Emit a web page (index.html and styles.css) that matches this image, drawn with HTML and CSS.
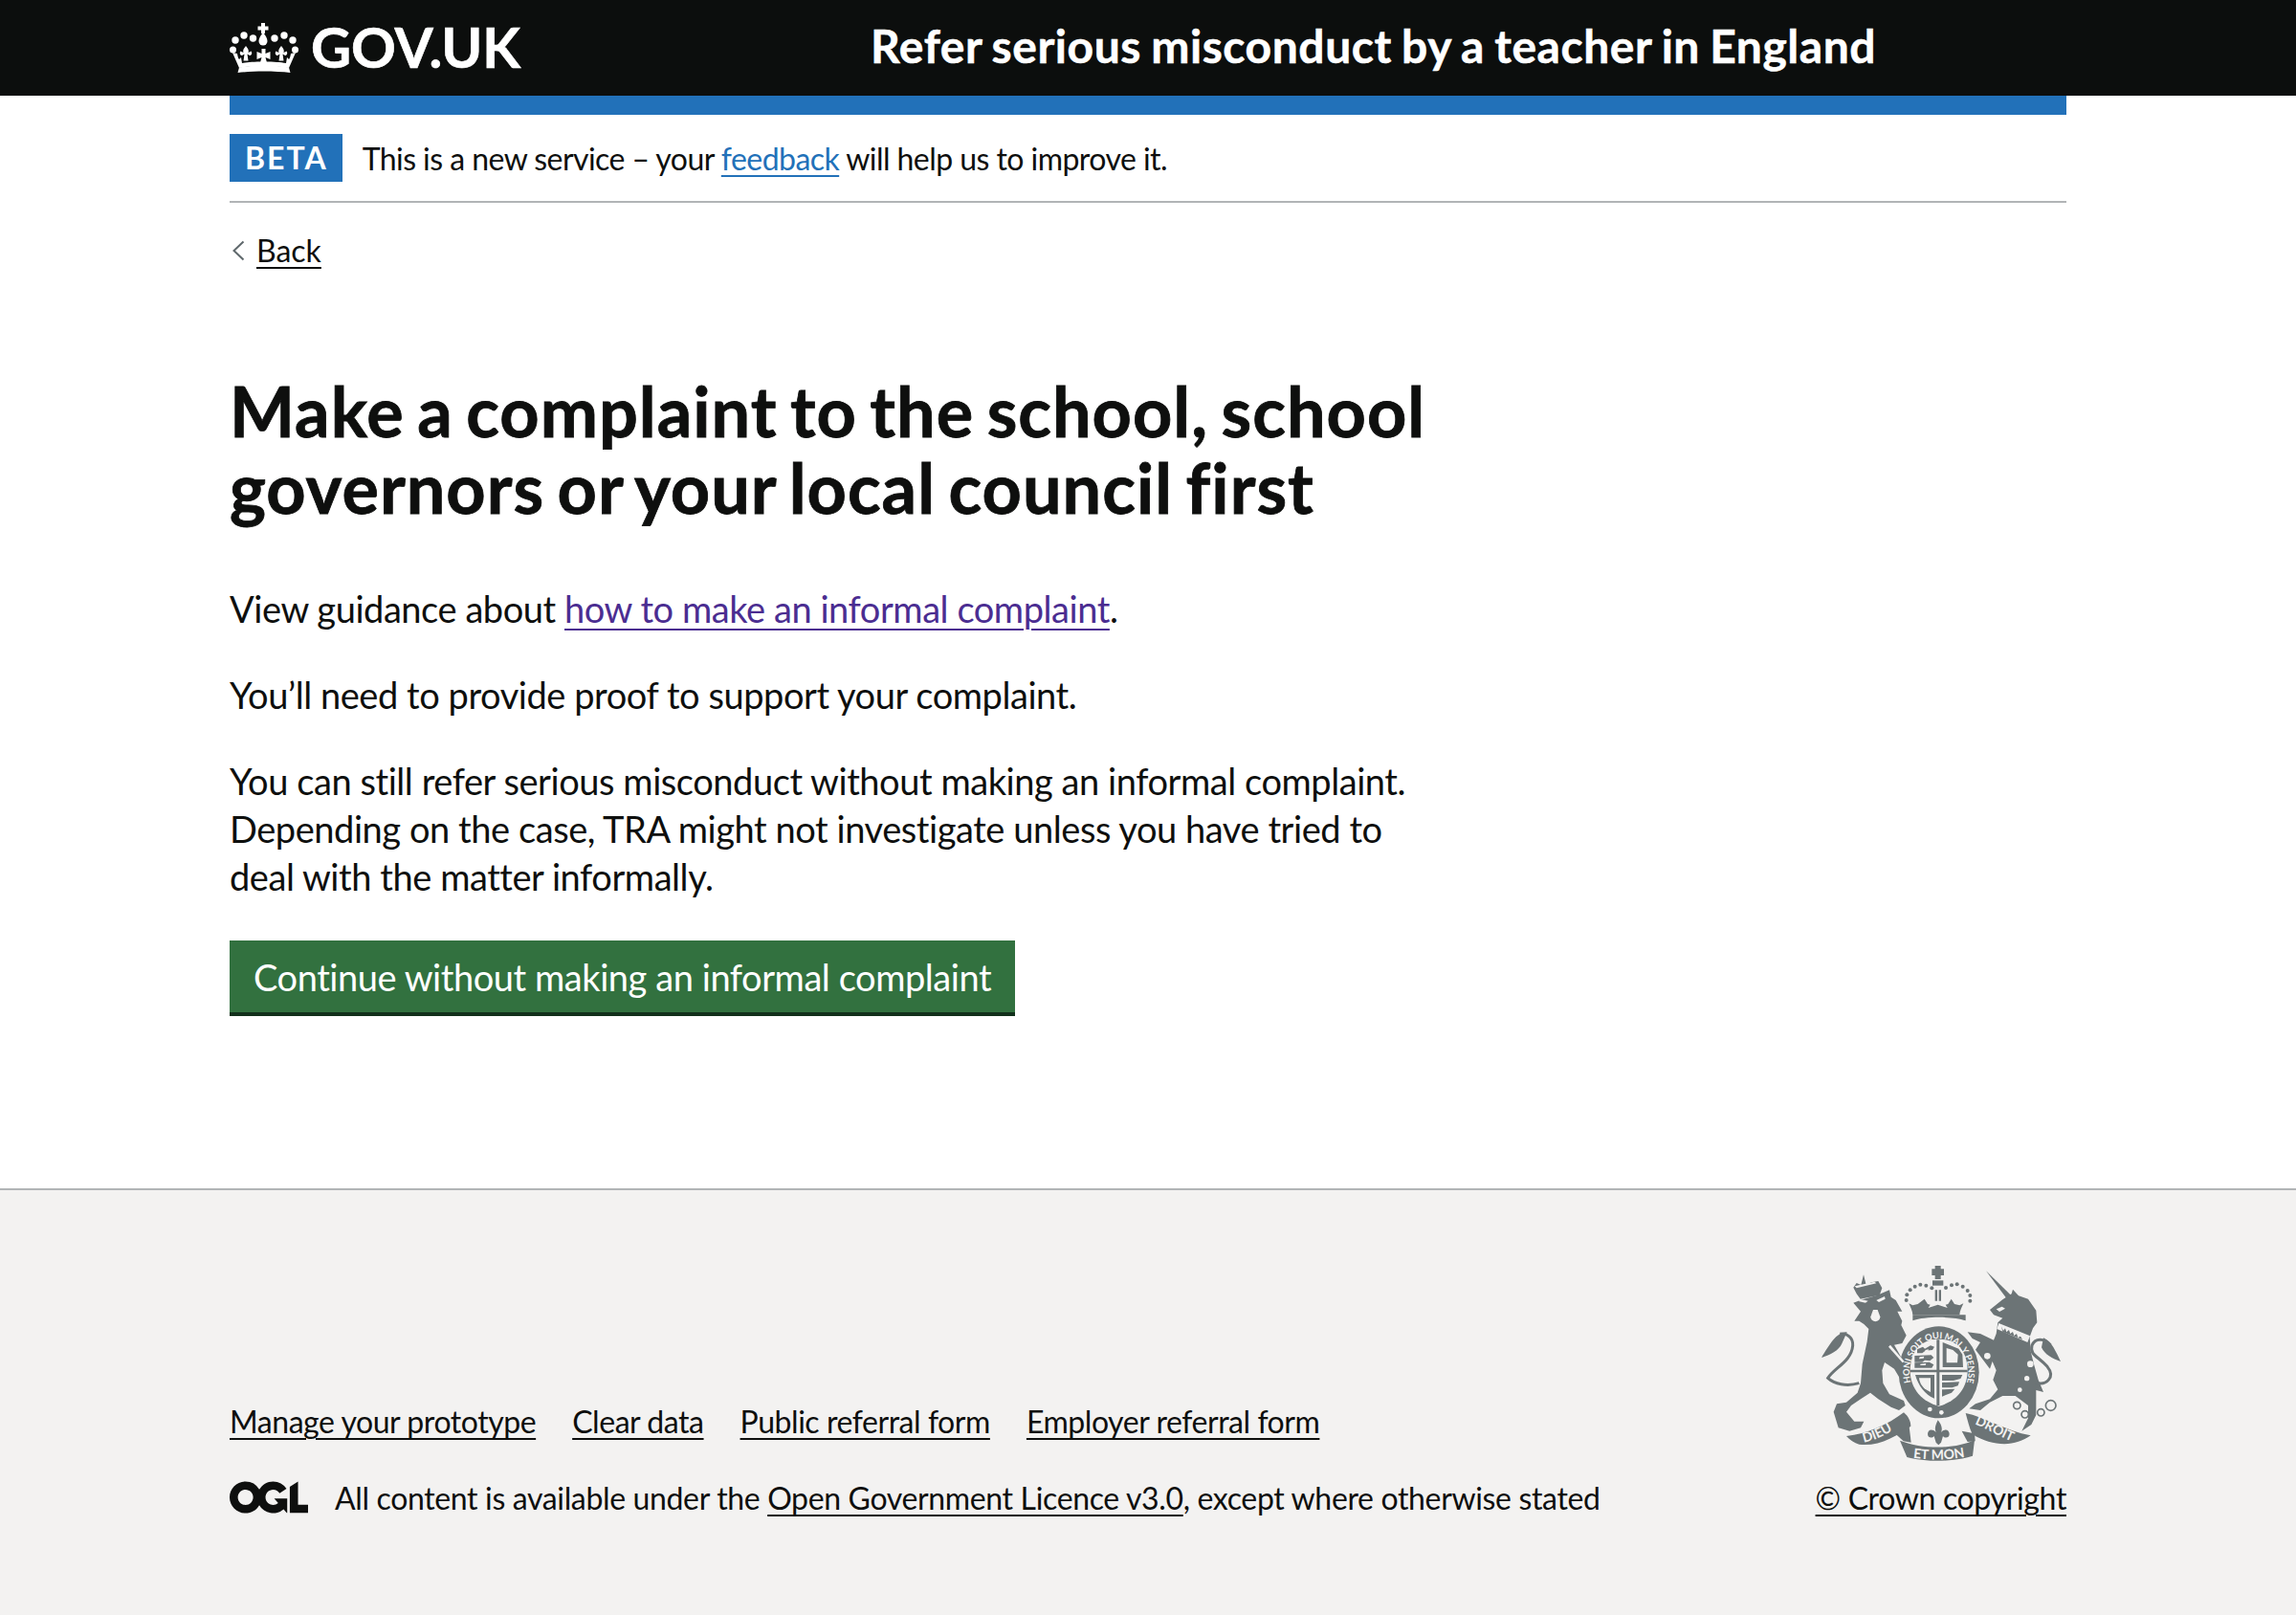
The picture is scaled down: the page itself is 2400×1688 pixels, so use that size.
FILE: index.html
```html
<!DOCTYPE html>
<html lang="en">
<head>
  <title>Make a complaint to the school, school governors or your local council first</title>
  <meta name="viewport" content="width=device-width, initial-scale=1.0">
  <link rel="stylesheet" href="styles.css">
</head>
<body>
  <header class="header">
    <div class="width-container header-inner">
      <a class="logo" href="#">
        <svg class="crown" viewBox="0 0 72 52" aria-hidden="true">
          <g fill="#fff">
            <path d="M33 0h4v3.500h3.500v4h-3.500v3.500h-4v-3.500h-3.500v-4h3.500z"/>
            <path d="M35 10c2.500 3 4.500 6 4.500 9a4.500 4.500 0 0 1-9 0c0-3 2-6 4.500-9z"/>
            <circle cx="6" cy="18" r="3.700"/>
            <circle cx="15" cy="13" r="3.700"/>
            <circle cx="24.500" cy="16" r="3.700"/>
            <circle cx="47" cy="16" r="3.700"/>
            <circle cx="57" cy="13" r="3.700"/>
            <circle cx="66" cy="18" r="3.700"/>
            <circle cx="3.500" cy="28" r="3.500"/>
            <circle cx="68.500" cy="28" r="3.500"/>
            <path d="M17 24c2 2.500 3.500 4.500 2.500 7l3 -1.500c1.500 2 .5 4.500-1.500 4.500l-2.500-1.500 1 7h-5l1-7-2.500 1.500c-2 0-3-2.500-1.500-4.500l3 1.500c-1-2.500.5-4.500 2.500-7z"/>
            <path d="M54 24c2 2.500 3.500 4.500 2.500 7l3-1.500c1.500 2 .5 4.500-1.500 4.500l-2.500-1.500 1 7h-5l1-7-2.500 1.500c-2 0-3-2.500-1.500-4.500l3 1.500c-1-2.500.5-4.500 2.500-7z"/>
            <path d="M33.500 27h4v5l5-2v8l-5-2 1.500 5.500h-7l1.500-5.500-5 2v-8l5 2z"/>
            <path d="M3 31l5 1c.5 3 1 5 2 6l2-2 1 6c6-1 12-1.500 23-1.500s17 .5 23 1.500l1-6 2 2c1-1 1.500-3 2-6l5-1-7 16c-4-1-15-2-26-2s-22 1-26 2z"/>
            <path d="M10 46.500c8-1.500 17-2 26-2s18 .5 26 2l1.500 5.500c-8-1-18-1.500-27.500-1.500s-19.500.5-27.500 1.500z"/>
          </g>
        </svg>
        <span class="logo-text">GOV.UK</span>
      </a>
      <a class="service-name" href="#">Refer serious misconduct by a teacher in England</a>
    </div>
  </header>

  <div class="width-container">
    <div class="blue-bar"></div>
    <div class="phase-banner">
      <strong class="tag">BETA</strong>
      <span class="phase-text">This is a new service – your <a class="link-blue" href="#">feedback</a> will help us to improve it.</span>
    </div>
    <div class="back">
      <svg class="back-arrow" viewBox="0 0 14 22" aria-hidden="true"><path d="M12.500 1.500 2.500 11l10 9.500" fill="none" stroke="#5f686c" stroke-width="2"/></svg>
      <a class="link" href="#">Back</a>
    </div>

    <main class="main">
      <h1 class="title">Make a complaint to the school, school governors or your local council first</h1>
      <p class="body-text">View guidance about <a class="link-visited" href="#">how to make an informal complaint</a>.</p>
      <p class="body-text">You’ll need to provide proof to support your complaint.</p>
      <p class="body-text">You can still refer serious misconduct without making an informal complaint. Depending on the case, TRA might not investigate unless you have tried to deal with the matter informally.</p>
      <a class="button" href="#">Continue without making an informal complaint</a>
    </main>
  </div>

  <footer class="footer">
    <div class="width-container footer-inner">
      <div class="footer-meta">
        <ul class="footer-links">
          <li><a class="link" href="#">Manage your prototype</a></li>
          <li><a class="link" href="#">Clear data</a></li>
          <li><a class="link" href="#">Public referral form</a></li>
          <li><a class="link" href="#">Employer referral form</a></li>
        </ul>
        <div class="licence">
          <svg class="ogl" viewBox="0 0 483.200 195.700" aria-hidden="true">
            <path fill="#0e0f0e" d="M421.500 142.800V.1l-50.700 32.300v161.100h112.400v-50.700zm-122.300-9.600A47.120 47.120 0 0 1 221 97.800c0-26 21.100-47.100 47.100-47.100 16.700 0 31.400 8.700 39.700 21.800l42.700-27.200A97.630 97.630 0 0 0 268.100 0c-36.500 0-68.300 20.100-85.100 49.700A98 98 0 0 0 97.800 0C43.900 0 0 43.900 0 97.800s43.900 97.800 97.800 97.800c36.500 0 68.300-20.100 85.100-49.700a97.760 97.760 0 0 0 149.600 25.400l19.400 22.200h3v-87.800h-80l24.300 27.500zM97.800 145c-26 0-47.100-21.100-47.100-47.100s21.100-47.100 47.100-47.100 47.200 21 47.200 47S123.800 145 97.800 145"/>
          </svg>
          <span>All content is available under the <a class="link" href="#">Open Government Licence v3.0</a>, except where otherwise stated</span>
        </div>
      </div>
      <div class="copyright">
        <svg class="arms" viewBox="0 0 900 699" aria-hidden="true">
          <defs>
            <path id="garter" d="M370 475A92 106 0 1 1 510 475"/>
            <path id="scroll-left" d="M205 626C245 618 280 600 322 570"/>
            <path id="scroll-mid" d="M345 672C400 682 480 682 535 668"/>
            <path id="scroll-right" d="M552 568C590 582 625 606 676 626"/>
          </defs>
          <g fill="#6c7476">
            <!-- lion -->
            <path d="M172 188L200 178 245 165 285 148 290 170 305 180 325 215 310 215 325 245 322 258 338 290 325 315 300 320 345 400 345 420 335 430 318 425 300 395 270 375 262 400 265 440 285 475 330 495 335 510 315 525 290 515 250 490 225 470 195 490 165 510 150 530 175 560 205 560 195 580 160 590 125 580 110 530 120 505 150 500 185 470 195 440 200 380 215 310 220 270 205 255 190 245 175 245 195 215z"/>
            <path d="M190 440C150 452 112 442 92 424 112 392 166 372 170 322 172 298 152 282 130 286" fill="none" stroke="#6c7476" stroke-width="9"/>
            <path d="M152 280C122 276 96 320 72 360 100 352 126 338 136 316z"/>
            <!-- lion crown -->
            <path d="M172 140l10-14 14 6 8-32 8 32 16-8 22-4 12 22-8 22-60 12-12-16z"/>
            <!-- unicorn -->
            <path d="M588 88l78 76-14 10z"/>
            <path d="M600 210L640 178 668 160 672 146 690 166 720 176 745 212 748 250 735 268 725 295 728 340 738 380 752 430 768 468 745 462 745 540 730 570 700 590 720 550 720 510 680 480 640 480 600 500 570 525 535 520 555 505 600 490 625 460 610 430 620 400 608 372 600 395 555 335 570 312 545 300 530 280 570 285 612 305 620 285 625 250 640 236 612 226z"/>
            <path d="M742 438C778 450 806 420 780 388 752 356 724 352 732 322 742 296 772 300 790 320" fill="none" stroke="#6c7476" stroke-width="9"/>
            <path d="M768 298C794 308 808 344 822 372 796 364 772 350 762 328z"/>
            <!-- crown on the shield -->
            <path d="M428 72h18v10h10v20h-10v12h-18v-12h-10v-20h10z"/>
            <path d="M420 118h34v16h-34z"/>
            <path d="M428 148h7v34h-7zM440 148h7v34h-7z"/>
            <circle cx="338" cy="180" r="6"/><circle cx="340" cy="163" r="6"/><circle cx="350" cy="148" r="6"/>
            <circle cx="365" cy="137" r="6"/><circle cx="382" cy="131" r="6"/><circle cx="400" cy="134" r="6"/>
            <circle cx="418" cy="142" r="6"/><circle cx="462" cy="141" r="6"/><circle cx="480" cy="133" r="6"/>
            <circle cx="497" cy="130" r="6"/><circle cx="515" cy="137" r="6"/><circle cx="530" cy="150" r="6"/>
            <circle cx="538" cy="165" r="6"/><circle cx="538" cy="182" r="6"/>
            <path d="M395 176l10 16 8 2-6 10 30-10 30 10-6-10 8-2 10-16 10 16 16 4 12-6c-4 10-12 24-12 36H358c0-12-8-26-12-36l12 6 16-4z"/>
            <path d="M358 226h166v18c-40-14-126-14-166 0z"/>
            <!-- garter ring -->
            <ellipse cx="440" cy="406" rx="126" ry="144"/>
            <!-- fleur and ribbon -->
            <path d="M437 556c10 12 16 26 10 38 14-14 26-6 26 6 0 12-14 14-20 6l-6 20-8 8-8-8-6-20c-6 8-20 6-20-6 0-12 12-20 26-6-6-12 0-26 6-38z"/>
            <path d="M150 606C215 600 280 570 330 532 345 545 352 560 352 575 310 605 250 640 190 632 175 628 160 618 150 606z"/>
            <path d="M305 600l42-24 6 50-24-4z"/>
            <path d="M318 620C390 648 490 648 552 618L546 668C480 688 400 688 340 672z"/>
            <path d="M524 534C580 545 650 590 728 604 680 640 610 640 545 600 535 580 530 555 524 534z"/>
            <path d="M512 590l40 8 2 24-24 2z"/>
          </g>
          <g fill="#f3f2f1">
            <!-- shield ground -->
            <path d="M440 302C490 302 528 330 530 400 530 460 490 500 440 512 390 500 350 460 350 400 352 330 390 302 440 302z"/>
            <circle cx="603" cy="272" r="9"/>
            <circle cx="592" cy="355" r="10"/>
            <circle cx="727" cy="380" r="10"/>
            <circle cx="716" cy="425" r="8"/>
            <circle cx="694" cy="461" r="7"/>
            <circle cx="448" cy="532" r="7"/>
            <circle cx="412" cy="522" r="7"/>
            <path d="M628 252l98 40-8 20-96-42z"/>
            <path d="M226 232a14 14 0 1 0 30 0l-8-22h-14z"/>
            <path d="M190 176l28 6-8 6-20-4zM270 168l-26 12 8 6 20-10z"/>
            <path d="M288 320l44 52-6 4-44-50z"/>
            <path d="M370 248c40-14 100-14 140 0l-6 12c-40-12-90-12-128 0z"/>
            <path d="M176 136l62-14 6 5-62 15z"/>
            <path d="M620 208l18-8 10 6-18 10z"/>
          </g>
          <g fill="#6c7476">
            <!-- shield cross, quarters -->
            <path d="M433 304h9v206h-9zM350 398h180v8h-180z"/>
            <path d="M372 334l18-8 6 6 18-10 12 4-6 10-22 2-10 8-16 0zM364 354l52-2 8 8-12 10-16-2-8 6-24 0zM364 376l46-2 14 8-6 10-54 0z"/>
            <path d="M452 312l50 20 12 18 2 40-64 0zM464 330l0 46 34 0 2-26-16-14z"/>
            <path d="M366 414h60v74c-30-12-50-40-60-74zM378 424c2 18 12 34 36 44l0-44z"/>
            <path d="M450 414l64 0-6 12-22 6-36 0zM450 438l54-2-4 12-18 6-32 0zM450 460l40-2-10 12-30 12z"/>
            <path d="M636 262l6 14 6-8 4 12 8-7 4 12 8-6 4 12 8-6 4 12 8-4 6 10-62-24z"/>
          </g>
          <g fill="#f3f2f1">
            <path d="M398 336l10-2-2 6-10 2zM380 358l14-2-2 6-14 2zM382 380l18-2-2 6-16 0z"/>
            <path d="M392 430l2 26 6 4 0-30zM404 430l2 30 4 0 0-30z"/>
            <path d="M476 344l4 22 8-12-4-10z"/>
          </g>
          <g class="arms-motto">
            <text font-size="28"><textPath href="#garter" startOffset="50%" text-anchor="middle">HONI SOIT QUI MAL Y PENSE</textPath></text>
            <text font-size="42"><textPath href="#scroll-left">DIEU</textPath></text>
            <text font-size="42"><textPath href="#scroll-mid" startOffset="50%" text-anchor="middle">ET MON</textPath></text>
            <text font-size="42"><textPath href="#scroll-right">DROIT</textPath></text>
          </g>
          <g fill="none" stroke="#6c7476" stroke-width="5">
            <circle cx="685" cy="510" r="11"/>
            <circle cx="710" cy="538" r="11"/>
            <circle cx="760" cy="532" r="11"/>
            <circle cx="791" cy="510" r="16"/>
          </g>
        </svg>
        <a class="link" href="#">© Crown copyright</a>
      </div>
    </div>
  </footer>
</body>
</html>
```
FILE: styles.css
```css
* {
  box-sizing: border-box;
}
body {
  margin: 0;
  min-height: 100vh;
  display: flex;
  flex-direction: column;
  background: white;
  color: #0e0f0e;
  font-family: Lato, "Noto Sans", sans-serif;
  font-variant-ligatures: none;
}
.width-container {
  width: 1920px;
  margin: 0 auto;
}
.link {
  color: #0e0f0e;
  text-decoration-thickness: 2px;
  text-underline-offset: 5px;
}
.link-blue {
  color: #2271b9;
  text-decoration-thickness: 2px;
  text-underline-offset: 5px;
}
.link-visited {
  color: #4b2d91;
  text-decoration-thickness: 2px;
  text-underline-offset: 6px;
}

/* header */
.header {
  background: #0c0e0d;
  height: 100px;
  width: 100%;
}
.header-inner {
  display: flex;
  align-items: center;
  height: 100px;
}
.logo {
  display: flex;
  align-items: center;
  width: 670px;
  color: white;
  text-decoration: none;
}
.crown {
  width: 72px;
  height: 52px;
  margin-right: 13px;
}
.logo-text {
  position: relative;
  top: -2px;
  font-size: 58px;
  font-weight: 700;
  letter-spacing: -0.1px;
  -webkit-text-stroke: 0.6px white;
}
.service-name {
  position: relative;
  top: -3px;
  color: white;
  font-size: 48px;
  font-weight: 700;
  letter-spacing: 0.55px;
  word-spacing: -2px;
  -webkit-text-stroke: 0.5px white;
  text-decoration: none;
}
.blue-bar {
  background: #2271b9;
  height: 20px;
}

/* beta banner */
.phase-banner {
  display: flex;
  align-items: center;
  gap: 21px;
  padding: 20px 0;
  border-bottom: 2px solid #b1b4b6;
  font-size: 32px;
  letter-spacing: -0.55px;
}
.tag {
  background: #2271b9;
  color: white;
  height: 50px;
  line-height: 50px;
  padding: 0 15px 0 16px;
  letter-spacing: 2px;
  font-size: 32px;
}

/* back link */
.back {
  display: flex;
  align-items: center;
  gap: 12px;
  height: 40px;
  margin-top: 30px;
  padding-left: 2px;
  font-size: 32px;
  line-height: 40px;
}
.back-arrow {
  width: 14px;
  height: 22px;
}

/* content */
.main {
  max-width: 1280px;
  padding-top: 107px;
  padding-bottom: 184px;
}
.title {
  margin: 0 0 62px;
  font-size: 72px;
  line-height: 80px;
  font-weight: 700;
  letter-spacing: 1px;
  word-spacing: -5px;
  -webkit-text-stroke: 0.8px #0e0f0e;
}
.body-text {
  margin: 0 0 40px;
  font-size: 38px;
  line-height: 50px;
  letter-spacing: -0.44px;
}
.button {
  display: inline-block;
  margin-top: 2px;
  background: #32713f;
  color: white;
  padding: 13px 25px 12px;
  font-size: 38px;
  line-height: 50px;
  letter-spacing: -0.44px;
  text-decoration: none;
  box-shadow: 0 4px 0 #12301b;
}

/* footer */
.footer {
  flex-grow: 1;
  background: #f3f2f1;
  border-top: 2px solid #b1b4b6;
  padding-top: 55px;
  font-size: 32px;
  line-height: 40px;
  letter-spacing: -0.35px;
}
.footer-inner {
  display: flex;
  justify-content: space-between;
  align-items: flex-end;
}
.footer-links {
  display: flex;
  gap: 38px;
  list-style: none;
  margin: 0 0 40px;
  padding: 0;
  letter-spacing: -0.45px;
}
.licence {
  display: flex;
  align-items: flex-start;
  gap: 28px;
}
.ogl {
  width: 82px;
  height: 34px;
  margin-top: 2px;
}
.copyright {
  display: flex;
  flex-direction: column;
  align-items: flex-end;
}
.arms {
  display: block;
  width: 300px;
  height: 233px;
  margin-bottom: 14px;
  margin-right: -20px;
}
.arms-motto {
  fill: #f3f2f1;
  font-family: Lato, sans-serif;
  font-weight: 700;
}
```
